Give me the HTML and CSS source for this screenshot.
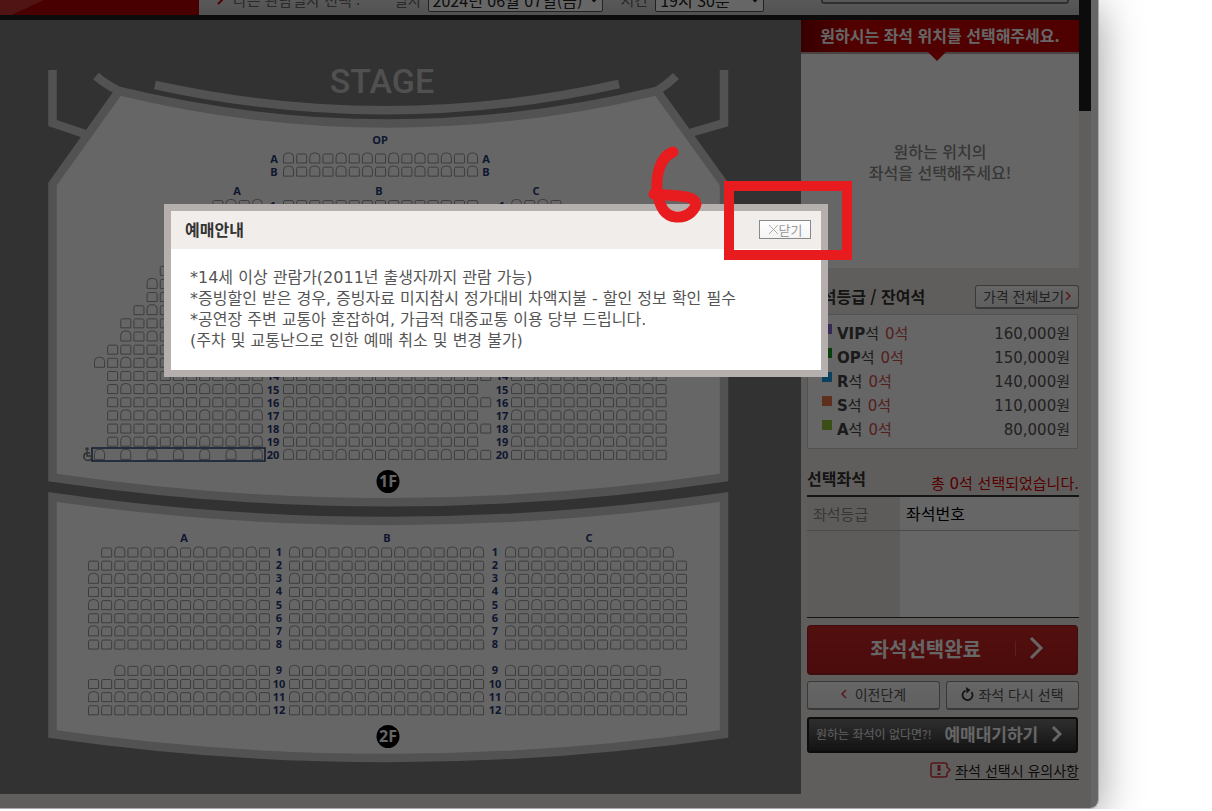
FILE: index.html
```html
<!DOCTYPE html>
<html lang="ko">
<head>
  <meta charset="UTF-8">
  <meta name="viewport" content="width=device-width, initial-scale=1.0">
  <title>좌석 선택</title>
  <link rel="stylesheet" href="styles.css">
</head>
<body>
  <div class="booking">
    <div class="page">
      <!-- Date / time bar -->
      <header class="topbar">
        <div class="step"></div>
        <form class="schedule">
          <svg class="arrow" width="8" height="12" viewBox="0 0 8 12"><path d="M1 1l5 5-5 5" fill="none" stroke="#c3000d" stroke-width="2"/></svg>
          <span class="schedule-title">다른 관람일자 선택 :</span>
          <label for="playDate">일자</label>
          <select id="playDate" class="date-select"><option>2024년 06월 07일(금)</option></select>
          <label for="playTime" class="time-label">시간</label>
          <select id="playTime" class="time-select"><option>19시 30분</option></select>
        </form>
        <div class="notice-box"></div>
      </header>

      <div class="content">
        <!-- Seat map -->
        <main class="map">
          <svg class="seat-map" viewBox="0 20 801 774">
            <defs>
              <path id="seat-round" class="seat" d="M.5 10.5V4.5Q.5 .5 4.5 .5H6.5Q10.5 .5 10.5 4.5V10.5Z"/>
              <path id="seat-square" class="seat" d="M.5 10.5V3Q.5 1.5 2 1.5H9Q10.5 1.5 10.5 3V10.5Z"/>
            </defs>
            <path class="floor" d="M119 91Q388 156 657 91L724 184V477.5Q388 527 52.5 477.5V184Z"/>
            <path class="floor" d="M52.5 497Q388 545 724 497V734Q388 782 52.5 734Z"/>
            <path class="wall" d="M96 76Q105 84 119 91M676 76Q668 84 657 91M155 85Q388 136 619 84M52.5 70V123L85 134M724 70V123L690 133"/>
            <text class="stage" x="382" y="93">STAGE</text>
            <g id="seats"></g>
            <g id="labels"></g>
            <rect class="wheel-zone" x="92" y="448" width="173" height="13"/>
            <g class="wheel">
              <circle cx="87" cy="449" r="1"/>
              <path d="M87 451v5h4l2 4M87 453h3M86 453a4 4 0 1 0 5 6"/>
            </g>
            <circle cx="388" cy="481.5" r="11.5"/>
            <text class="floor-name" x="388" y="487">1F</text>
            <circle cx="388" cy="736.5" r="11.5"/>
            <text class="floor-name" x="388" y="742">2F</text>
          </svg>
        </main>

        <!-- Seat info -->
        <aside class="side">
          <h2 class="guide">원하시는 좌석 위치를 선택해주세요.</h2>
          <div class="preview">
            <p>원하는 위치의<br>좌석을 선택해주세요!</p>
          </div>
          <div class="side-body">
            <div class="grade-head">
              <h3>좌석등급 / 잔여석</h3>
              <button class="btn price-btn">가격 전체보기
                <svg width="6" height="10" viewBox="0 0 6 10"><path d="M1 1l4 4-4 4" fill="none" stroke="#e0373c" stroke-width="1.5"/></svg>
              </button>
            </div>
            <ul class="grades">
              <li><i class="vip"></i><span class="name"><b>VIP</b>석</span><em>0석</em><span class="price">160,000원</span></li>
              <li><i class="op"></i><span class="name"><b>OP</b>석</span><em>0석</em><span class="price">150,000원</span></li>
              <li><i class="r"></i><span class="name"><b>R</b>석</span><em>0석</em><span class="price">140,000원</span></li>
              <li><i class="s"></i><span class="name"><b>S</b>석</span><em>0석</em><span class="price">110,000원</span></li>
              <li><i class="a"></i><span class="name"><b>A</b>석</span><em>0석</em><span class="price">80,000원</span></li>
            </ul>
            <div class="picked-head">
              <h3>선택좌석</h3>
              <p>총 0석 선택되었습니다.</p>
            </div>
            <table class="picked">
              <thead>
                <tr><th class="grade-col">좌석등급</th><th>좌석번호</th></tr>
              </thead>
              <tbody>
                <tr><td class="grade-col"></td><td></td></tr>
              </tbody>
            </table>
            <button class="done-btn">
              <span>좌석선택완료</span>
              <svg width="32" height="24" viewBox="0 0 32 24" fill="none" stroke="#fff"><path d="M2.5 5v15" stroke="#d9534f"/><path d="M18 2l10 10-10 10" stroke-width="3"/></svg>
            </button>
            <div class="sub-buttons">
              <button class="btn">
                <svg width="6" height="10" viewBox="0 0 6 10"><path d="M5 1L1 5l4 4" fill="none" stroke="#e0373c" stroke-width="1.5"/></svg>
                이전단계
              </button>
              <button class="btn again-btn">
                <svg width="13" height="14" viewBox="0 0 13 14"><path d="M4.5 3.5A5 5 0 1 0 10.5 5" fill="none" stroke="#333" stroke-width="1.8"/><path d="M5 0l4.500 3-4 3.500z" fill="#333"/></svg>
                좌석 다시 선택
              </button>
            </div>
            <button class="wait-btn">
              <small>원하는 좌석이 없다면?!</small>
              <span>예매대기하기</span>
              <svg width="11" height="16" viewBox="0 0 11 16"><path d="M2 1l7 7-7 7" fill="none" stroke="#fff" stroke-width="3"/></svg>
            </button>
            <p class="caution">
              <svg width="21" height="16" viewBox="0 0 21 16" fill="none" stroke="#d2323a" stroke-width="1.5"><path d="M3 1H15Q17 1 17 3V5L20 8L17 11V13Q17 15 15 15H3Q1 15 1 13V3Q1 1 3 1Z"/><path d="M9 3v6M9 11v2" stroke-width="3"/></svg>
              <a href="#">좌석 선택시 유의사항</a>
            </p>
          </div>
        </aside>
      </div>
    </div>
    <div class="gutter"></div>
    <div class="dim"></div>
  </div>

  <!-- Notice popup -->
  <section class="popup" role="dialog" aria-labelledby="popupTitle">
    <header class="popup-head">
      <h1 id="popupTitle">예매안내</h1>
      <button class="close-btn" id="closePopup">
        <svg width="11" height="11" viewBox="0 0 11 11"><path d="M1 1l9 9M10 1l-9 9" stroke="#aaa"/></svg>닫기
      </button>
    </header>
    <div class="popup-body">
      <p>*14세 이상 관람가(2011년 출생자까지 관람 가능)</p>
      <p>*증빙할인 받은 경우, 증빙자료 미지참시 정가대비 차액지불 - 할인 정보 확인 필수</p>
      <p>*공연장 주변 교통아 혼잡하여, 가급적 대중교통 이용 당부 드립니다.</p>
      <p>(주차 및 교통난으로 인한 예매 취소 및 변경 불가)</p>
    </div>
  </section>

  <!-- Red marker -->
  <svg class="marker" width="210" height="125" viewBox="645 140 210 125">
    <rect x="729" y="186" width="118" height="69" stroke-width="10"/>
    <path d="M673 152C660 157 656 175 657 190C659 206 664 216 676 217C689 218 695 209 696 204C695 195 674 196 654 194" stroke-width="11"/>
  </svg>

  <script src="seats.js"></script>
</body>
</html>
```

FILE: styles.css
```css
* {
  box-sizing: border-box;
}
body {
  margin: 0;
  overflow: hidden;
  background: #fff;
  font-family: "DejaVu Sans", "Noto Sans CJK KR", sans-serif;
  font-size: 15px;
  color: #555;
}
h1, h2, h3, p, ul {
  margin: 0;
  padding: 0;
}
button, select {
  font-family: "Noto Sans CJK KR", sans-serif;
  cursor: pointer;
}

/* Window */
.booking {
  position: relative;
  display: flex;
  margin-right: 113px;
  background: #f1ece7;
  border: solid #aaa;
  border-width: 0 1px 1px 0;
  border-radius: 0 0 9px 0;
  box-shadow: 0 8px 44px rgba(0, 0, 0, 0.4);
}
.page {
  flex: 1;
  padding-bottom: 14px;
}
.gutter {
  width: 19px;
  border-right: 7px solid #fff;
  border-bottom-right-radius: 8px;
  background: linear-gradient(#1f1f1f 111px, #f1ece7 111px);
}
.dim {
  position: absolute;
  inset: 0;
  background: rgba(0, 0, 0, 0.6);
  border-radius: 0 0 8px 0;
}

/* Top bar */
.topbar {
  display: flex;
  align-items: flex-end;
  height: 20px;
  overflow: hidden;
  border-bottom: 5px solid #1f1f1f;
  background: linear-gradient(#ddd, #cbcbcb);
  font-family: "Noto Sans CJK KR", sans-serif;
  font-size: 15px;
}
.step {
  width: 199px;
  height: 15px;
  background: linear-gradient(155deg, #ca3333 18px, #b50000 19px);
}
.schedule {
  display: flex;
  align-items: center;
  height: 26px;
  margin-bottom: 3px;
  padding-left: 18px;
  color: #666;
}
.arrow {
  margin-right: 8px;
}
.schedule-title {
  width: 161px;
}
.schedule select {
  height: 26px;
  padding: 0;
  border: 1px solid #555;
  border-radius: 2px;
  background: #fff;
  color: #222;
  font-size: 16px;
}
.schedule .date-select {
  width: 175px;
  margin-left: 6px;
}
.time-label {
  margin-left: 18px;
}
.schedule .time-select {
  width: 109px;
  margin-left: 7px;
}
.notice-box {
  width: 248px;
  height: 30px;
  margin: 0 10px 11px auto;
  border: 2px solid #777;
  border-radius: 3px;
}

/* Seat map */
.content {
  display: flex;
}
.map {
  flex: 1;
  background: #7d7d7d;
}
.seat-map {
  display: block;
  width: 100%;
}
.floor {
  fill: #fff;
  stroke: #cdcdcd;
  stroke-width: 8.5;
}
.wall {
  fill: none;
  stroke: #cdcdcd;
  stroke-width: 8.5;
}
.seat {
  fill: none;
  stroke: #989898;
}
.stage {
  font: 500 34px Roboto, sans-serif;
  fill: #c8c8c8;
  text-anchor: middle;
}
.label {
  font: bold 11px "Noto Sans", sans-serif;
  fill: #2a3b78;
  text-anchor: middle;
}
.floor-name {
  font: bold 16px "Noto Sans", sans-serif;
  fill: #fff;
  text-anchor: middle;
}
.wheel-zone {
  fill: none;
  stroke: #25457e;
  stroke-width: 1.5;
}
.wheel {
  fill: none;
  stroke: #777;
  stroke-width: 1.5;
}

/* Side column */
.side {
  width: 278px;
}
.guide {
  position: relative;
  height: 34px;
  border-bottom: 2px solid #b9a5a0;
  background: linear-gradient(90deg, #880000, #cc0000 50px, #c40000);
  color: #fff;
  font: bold 16px/30px "Noto Sans CJK KR", sans-serif;
  text-align: center;
}
.guide::after {
  content: "";
  position: absolute;
  top: 32px;
  left: 127px;
  border: 9px solid transparent;
  border-top-color: #cc0000;
  border-bottom: 0;
}
.preview {
  display: flex;
  align-items: center;
  justify-content: center;
  height: 214px;
  padding-top: 2px;
  background: #fff;
  color: #8a8a8a;
  font: 500 16px/21px "Noto Sans CJK KR", sans-serif;
  text-align: center;
}
.side-body {
  padding: 17px 0 0 6px;
}
.side-body h3 {
  color: #333;
  font: bold 16px/22px "Noto Sans CJK KR", sans-serif;
}
.grade-head {
  display: flex;
  justify-content: space-between;
}
.btn {
  display: flex;
  align-items: center;
  justify-content: center;
  gap: 8px;
  padding: 0 0 2px;
  border: 1px solid #8f8f8f;
  border-bottom-width: 2px;
  border-radius: 3px;
  background: linear-gradient(#fff, #eee);
  color: #555;
  font-size: 14px;
}
.price-btn {
  gap: 1px;
  width: 104px;
  height: 24px;
}
.grades {
  height: 135px;
  margin: 5px 1px 0 0;
  padding: 5px 7px 0 14px;
  border: 1px solid #ccc;
  background: #fff;
  list-style: none;
}
.grades li {
  display: flex;
  align-items: center;
  height: 24px;
}
.grades i {
  width: 10px;
  height: 10px;
  margin: 0 5px 6px 0;
}
.grades b {
  color: #444;
}
.grades .name {
  color: #444;
}
.grades em {
  margin-left: 6px;
  color: #d05050;
  font-style: normal;
}
.grades .price {
  margin-left: auto;
}
.vip { background: #8a68d6; }
.op { background: #179a17; }
.r { background: #17a0e8; }
.s { background: #e8754a; }
.a { background: #93c43c; }
.picked-head {
  display: flex;
  align-items: flex-end;
  justify-content: space-between;
  height: 46px;
}
.picked-head h3 {
  margin-bottom: 6px;
}
.picked-head p {
  color: #d50000;
  line-height: 22px;
}
.picked {
  width: 100%;
  border-collapse: collapse;
  border-top: 2px solid #333;
  border-bottom: 1px solid #333;
  background: #fff;
}
.picked th {
  height: 34px;
  padding: 0 6px;
  border-bottom: 1px solid #bbb;
  color: #000;
  font-size: 16px;
  font-weight: normal;
  text-align: left;
}
.picked td {
  height: 87px;
}
.picked .grade-col {
  width: 93px;
  background: #ece7e2;
  color: #888;
  font-size: 15px;
}
.done-btn {
  display: flex;
  align-items: center;
  justify-content: flex-end;
  gap: 32px;
  width: 271px;
  height: 50px;
  margin-top: 7px;
  padding: 0 32px 2px 0;
  border: 1px solid #98201f;
  border-bottom-width: 2px;
  border-radius: 4px;
  background: linear-gradient(#cc2826, #bd1e1c);
  color: #fff;
  font-size: 20px;
  font-weight: bold;
}
.sub-buttons {
  display: grid;
  grid-template-columns: 1fr 1fr;
  gap: 6px;
  margin-top: 6px;
}
.sub-buttons .btn {
  height: 29px;
}
.sub-buttons .again-btn {
  gap: 4px;
}
.wait-btn {
  display: flex;
  align-items: center;
  justify-content: space-between;
  width: 271px;
  height: 36px;
  margin-top: 7px;
  padding: 0 14px 2px 7px;
  border: 2px solid #1e1e1e;
  border-radius: 3px;
  background: linear-gradient(#747474, #303030);
  color: #fff;
  font-size: 17px;
  font-weight: bold;
}
.wait-btn small {
  color: #eee;
  font-size: 12px;
  font-weight: normal;
}
.caution {
  display: flex;
  align-items: center;
  justify-content: flex-end;
  gap: 4px;
  height: 22px;
  margin-top: 6px;
  font: 14px "Noto Sans CJK KR", sans-serif;
}
.caution a {
  color: #222;
  text-underline-offset: 3px;
}

/* Popup */
.popup {
  position: absolute;
  top: 204px;
  left: 164px;
  width: 664px;
  border: 7px solid #b5afae;
  background: #fff;
}
.popup-head {
  display: flex;
  align-items: center;
  justify-content: space-between;
  height: 38px;
  padding: 0 10px 2px 14px;
  background: #f1edea;
}
.popup-head h1 {
  color: #333;
  font: bold 16px "Noto Sans CJK KR", sans-serif;
}
.close-btn {
  display: flex;
  align-items: center;
  justify-content: center;
  width: 52px;
  height: 19px;
  padding: 0;
  border: 1px solid #888;
  background: linear-gradient(#fff, #f4f4f4);
  color: #999;
  font-size: 13px;
}
.popup-body {
  padding: 18px 19px 19px;
  color: #555;
  font-size: 16px;
  line-height: 21px;
}
.popup-body p {
  height: 21px;
  white-space: nowrap;
}

.marker {
  position: absolute;
  top: 140px;
  left: 645px;
  fill: none;
  stroke: #e81c1e;
  stroke-linecap: round;
  pointer-events: none;
}
```

FILE: seats.js
```javascript
// Seat and row pitch
const PITCH = 13.15;

const seatGroup = document.getElementById("seats");
const labelGroup = document.getElementById("labels");
let seatMarkup = "";
let labelMarkup = "";

// Draw seats from column "from" to column "to" of one row
function addRow(x, y, from, to, row, step = 1) {
  for (let col = from; col <= to; col += step) {
    const shape = (row + 1) % 2 === 0 && col % 2 === 0 ? "round" : "square";
    seatMarkup += `<use href="#seat-${shape}" x="${x + col * PITCH}" y="${y - 5.5}"/>`;
  }
}

function addLabel(text, x, y) {
  labelMarkup += `<text class="label" x="${x}" y="${y + 4}">${text}</text>`;
}

// OP
addLabel("OP", 380, 140);
["A", "B"].forEach((name, i) => {
  const y = 158 + i * PITCH;
  addRow(283, y, 0, 14, 1);
  addLabel(name, 274, y + 1);
  addLabel(name, 486, y + 1);
});

// 1F
addLabel("A", 237, 191);
addLabel("B", 379, 191);
addLabel("C", 536, 191);
const firstSeat = [9, 8, 7, 6, 6, 5, 4, 4, 3, 2, 2, 1, 0, 1, 1, 1, 1, 1, 1, 0];
for (let row = 1; row <= 20; row++) {
  const y = 204.5 + (row - 1) * PITCH;
  addRow(94, y, firstSeat[row - 1], 12, row === 20 ? 1 : row, row === 20 ? 2 : 1);
  addRow(283, y, 0, row > 1 && row % 2 === 0 ? 15 : 14, row + 1);
  addRow(511, y, 0, row === 1 ? 3 : 11, row);
  // rows 2 to 13 have no number beside them
  if (row === 1 || row > 13) {
    addLabel(row, 273, y + 1);
    addLabel(row, 502, y + 1);
  }
}

// 2F
addLabel("A", 184, 538);
addLabel("B", 387, 538);
addLabel("C", 589, 538);
for (let row = 1; row <= 12; row++) {
  // aisle between rows 8 and 9
  const line = row > 8 ? row : row - 1;
  const y = 552 + line * PITCH;
  const cut = row === 1 ? 1 : row === 9 ? 2 : 0;
  addRow(88, y, cut, 13, row);
  addRow(289, y, 0, 14, row);
  addRow(505, y, 0, 13 - cut, row);
  addLabel(row, 279, y);
  addLabel(row, 495, y);
}

seatGroup.innerHTML = seatMarkup;
labelGroup.innerHTML = labelMarkup;

// Close the popup
document.getElementById("closePopup").addEventListener("click", () => {
  document.querySelector(".popup").remove();
  document.querySelector(".dim").remove();
});
```
